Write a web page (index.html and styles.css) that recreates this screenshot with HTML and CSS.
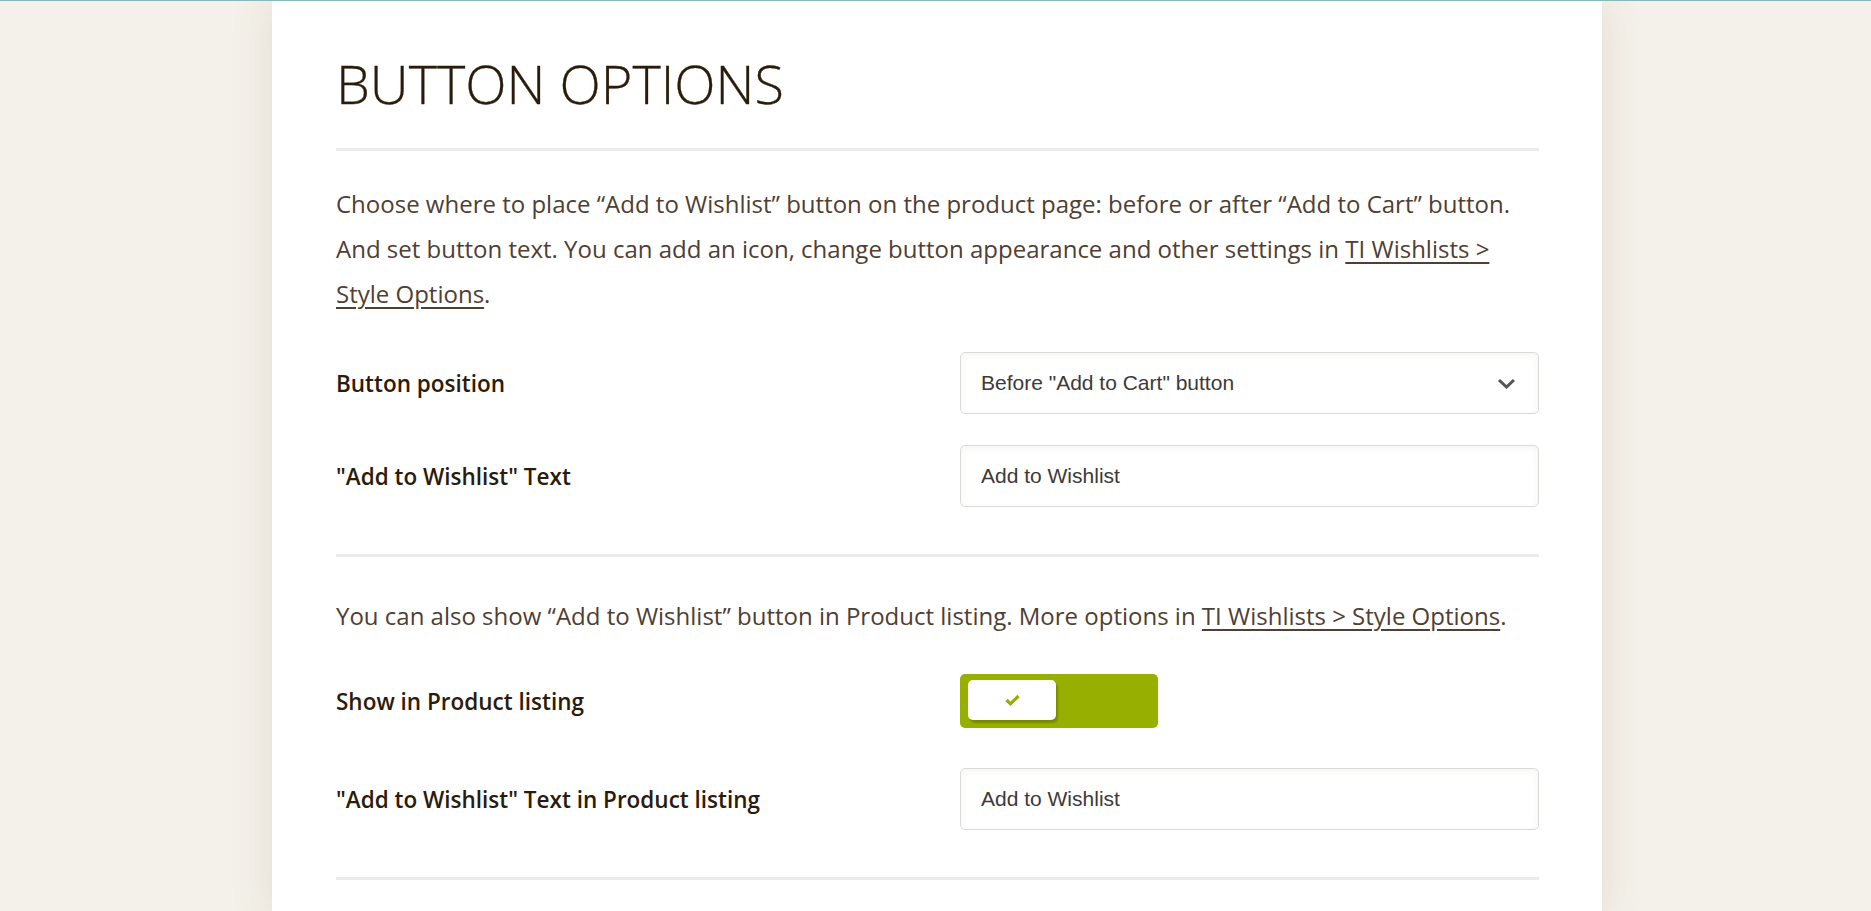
FILE: index.html
```html
<!DOCTYPE html>
<html lang="en">
<head>
<meta charset="utf-8">
<title>Button Options</title>
<link rel="stylesheet" href="styles.css">
</head>
<body>
<div class="topline"></div>
<main class="sheet">
  <h1 class="title">BUTTON OPTIONS</h1>
  <hr class="divider">
  <p class="intro">Choose where to place “Add to Wishlist” button on the product page: before or after “Add to Cart” button. And set button text. You can add an icon, change button appearance and other settings in <a href="#" class="link">TI Wishlists &gt; Style Options</a>.</p>
  <div class="rows rows-first">
    <div class="row">
      <label class="label">Button position</label>
      <div class="control select">
        <span class="value">Before "Add to Cart" button</span>
        <svg class="chevron" width="19" height="11" viewBox="0 0 19 11"><path d="M2 2l7.5 7 7.5-7" fill="none" stroke="#555" stroke-width="3"/></svg>
      </div>
    </div>
    <div class="row">
      <label class="label">"Add to Wishlist" Text</label>
      <div class="control input"><span class="value">Add to Wishlist</span></div>
    </div>
  </div>
  <hr class="divider">
  <p class="intro intro-second">You can also show “Add to Wishlist” button in Product listing. More options in <a href="#" class="link">TI Wishlists &gt; Style Options</a>.</p>
  <div class="rows rows-second">
    <div class="row row-toggle">
      <label class="label">Show in Product listing</label>
      <div class="toggle-wrap">
        <div class="toggle">
          <div class="knob">
            <svg width="15" height="12" viewBox="0 0 15 12"><path d="M1.5 6l4 3.8L13.5 2" fill="none" stroke="#97b000" stroke-width="3.2"/></svg>
          </div>
        </div>
      </div>
    </div>
    <div class="row">
      <label class="label">"Add to Wishlist" Text in Product listing</label>
      <div class="control input"><span class="value">Add to Wishlist</span></div>
    </div>
  </div>
  <hr class="divider">
</main>
</body>
</html>
```
FILE: styles.css
```css
html, body {
  margin: 0;
  padding: 0;
}
body {
  background: #f4f1ea;
  font-family: "Open Sans", "Liberation Sans", sans-serif;
  overflow: hidden;
  height: 911px;
}
.topline {
  height: 1px;
  background: #8ab6b9;
  position: relative;
  z-index: 2;
}
.sheet {
  width: 1330px;
  margin: -1px 0 0 calc(50% - 663.5px);
  background: #fff;
  box-sizing: border-box;
  padding: 56px 63px 40px 64px;
  min-height: 912px;
  box-shadow: 0 0 40px rgba(120, 90, 50, 0.13);
}
.title {
  margin: 0;
  font-weight: 300;
  font-size: 54px;
  line-height: 54px;
  color: #2a1b0a;
  -webkit-text-stroke: 0.3px #2a1b0a;
}
.divider {
  border: 0;
  height: 3px;
  background: #ebebeb;
  margin: 38px 0 0;
}
.intro {
  margin: 30px 0 0;
  font-size: 24px;
  line-height: 45px;
  color: #4f4033;
}
.intro-second {
  margin-top: 36px;
}
.link {
  color: #4f4033;
  text-decoration: underline;
  text-underline-offset: 4px;
}
.rows {
  display: flex;
  flex-direction: column;
}
.rows-first {
  margin: 36px 0 47px;
  gap: 31px;
}
.rows-second {
  margin: 36px 0 47px;
  gap: 40px;
}
.rows + .divider {
  margin-top: 0;
}
.row {
  display: grid;
  grid-template-columns: 624px 1fr;
  align-items: center;
  min-height: 62px;
}
.row-toggle {
  min-height: 54px;
}
.label {
  font-size: 22.5px;
  font-weight: 600;
  color: #2b1b0a;
}
.control {
  height: 62px;
  box-sizing: border-box;
  border: 1px solid #dcdad6;
  border-radius: 5px;
  background: #fff;
  box-shadow: inset 0 2px 6px rgba(120, 100, 70, 0.07);
  display: flex;
  align-items: center;
  justify-content: space-between;
  padding: 0 22px 0 20px;
}
.value {
  font-family: "Liberation Sans", Arial, sans-serif;
  font-size: 21px;
  color: #3d3a37;
}
.toggle-wrap {
  display: flex;
  align-items: center;
}
.toggle {
  width: 198px;
  height: 54px;
  box-sizing: border-box;
  background: #97b000;
  border-radius: 5px;
  padding: 6px 8px;
}
.knob {
  width: 88px;
  height: 40px;
  background: #fff;
  border-radius: 5px;
  box-shadow: 2px 3px 2px rgba(60, 70, 0, 0.35);
  display: flex;
  align-items: center;
  justify-content: center;
}
```
